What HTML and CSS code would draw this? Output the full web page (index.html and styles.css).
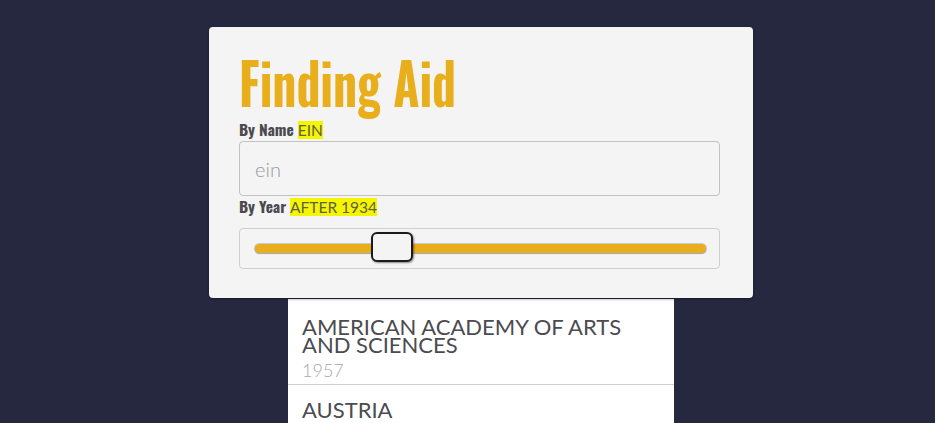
FILE: index.html
```html
<!DOCTYPE html>
<html>
<head>
<meta charset="utf-8">
<link rel="stylesheet" href="styles.css">
</head>
<body>
<div class="page">
  <div class="card">
    <h1 class="title">Finding Aid</h1>
    <div class="label">By Name <span class="hl">EIN</span></div>
    <div class="input">ein</div>
    <div class="label">By Year <span class="hl">AFTER 1934</span></div>
    <div class="slider">
      <div class="track">
        <div class="thumb"></div>
      </div>
    </div>
  </div>
  <ul class="results">
    <li class="item">
      <div class="name">AMERICAN ACADEMY OF ARTS AND SCIENCES</div>
      <div class="year">1957</div>
    </li>
    <li class="item">
      <div class="name">AUSTRIA</div>
      <div class="year">1960</div>
    </li>
  </ul>
</div>
</body>
</html>
```

FILE: styles.css
```css
html, body {
  margin: 0;
  padding: 0;
  background: #262840;
  height: 100%;
  overflow: hidden;
}
.page {
  width: 544px;
  margin: 27px 0 0 209px;
}
.card {
  background: #f4f4f4;
  border-radius: 4px;
  box-shadow: 0 1px 3px rgba(0,0,0,0.4);
  padding: 24px 33px 29px 30px;
  position: relative;
  z-index: 1;
}
.title {
  margin: 0 0 8px 0;
  font-family: "Oswald", "Liberation Sans Narrow", "DejaVu Sans Condensed", sans-serif;
  font-weight: 700;
  font-size: 57px;
  line-height: 60px;
  color: #e8ae1c;
  transform: scaleX(0.835);
  transform-origin: left center;
}
.label {
  font-family: "Oswald", "Liberation Sans Narrow", "DejaVu Sans Condensed", sans-serif;
  font-weight: 700;
  font-size: 15.5px;
  line-height: 20px;
  color: #4b4b4f;
}
.hl {
  font-family: "Lato", sans-serif;
  font-weight: 400;
  font-size: 15.5px;
  background: #f5f500;
  color: #5f5f48;
}
.input {
  margin-top: 1px;
  height: 53px;
  border: 1px solid #c2c2c2;
  border-radius: 4px;
  padding: 0 15px;
  display: flex;
  align-items: center;
  font-family: "Lato", sans-serif;
  font-weight: 300;
  font-size: 20px;
  color: #9a9a9a;
}
.slider {
  margin-top: 11px;
  height: 39px;
  border: 1px solid #cfcfcf;
  border-radius: 4px;
  padding: 0 13px 0 15px;
  display: flex;
  align-items: center;
}
.track {
  position: relative;
  flex: 1;
  height: 9px;
  background: #e8ae1c;
  border-radius: 5px;
  box-shadow: 0 1px 1px #a9a9b5, 0 0 0 1px #c9c9d0;
}
.thumb {
  position: absolute;
  left: 116px;
  top: -12px;
  width: 38px;
  height: 26px;
  background: #f4f4f4;
  border: 2px solid #1b1b1b;
  border-radius: 6px;
  box-shadow: 1px 1px 2px rgba(0,0,0,0.45);
}
.results {
  list-style: none;
  margin: 1px 79px 0 79px;
  padding: 3px 0 0 0;
  background: #fff;
}
.item {
  padding: 16px 14px 3px 14px;
  border-bottom: 1px solid #cfcfcf;
  font-family: "Lato", sans-serif;
}
.name {
  font-size: 22px;
  line-height: 18px;
  font-weight: 400;
  color: #4b4b50;
}
.year {
  margin-top: 5px;
  font-size: 18px;
  line-height: 22px;
  font-weight: 300;
  color: #a8a8a8;
}
```
